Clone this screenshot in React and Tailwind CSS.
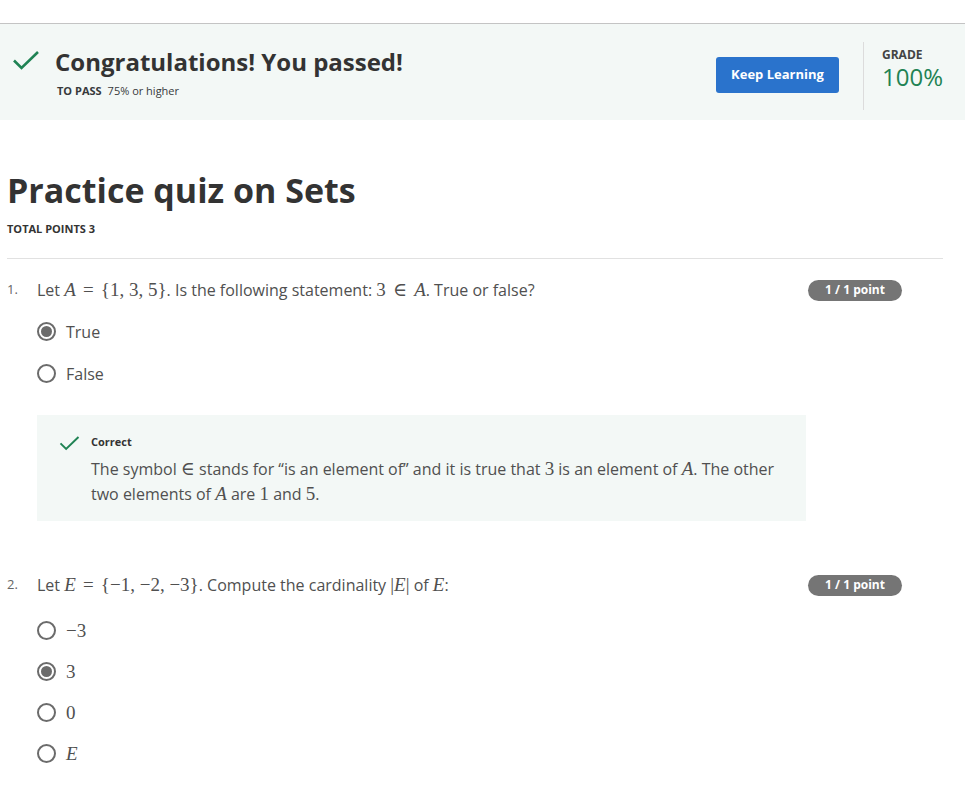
import React from 'react'

const M = ({ children, i, op }) => (
  <span
    className={`text-[19px] leading-none ${i ? 'italic' : ''} ${op ? 'mx-[3px]' : ''}`}
    style={{ fontFamily: '"Liberation Serif", "DejaVu Serif", serif' }}
  >
    {children}
  </span>
)

const Check = ({ className }) => (
  <svg viewBox="0 0 28 20" className={`shrink-0 ${className}`} fill="none">
    <path d="M2 10.5 L9.5 18 L26 2" stroke="#1f8354" strokeWidth="2.6" />
  </svg>
)

const Radio = ({ checked, children }) => (
  <div className="flex items-center h-[41px]">
    <span className="w-[19px] h-[19px] rounded-full border-2 border-[#6b6b6b] flex items-center justify-center">
      {checked && <span className="w-[11px] h-[11px] rounded-full bg-[#6b6b6b]"></span>}
    </span>
    <span className="ml-[10px] text-[16px] text-[#505050]">{children}</span>
  </div>
)

const Badge = () => (
  <span className="h-[21px] w-[94px] rounded-full bg-[#757575] text-white text-[12px] font-bold flex items-center justify-center">
    1 / 1 point
  </span>
)

const App = () => {
  return (
    <div className="min-h-screen bg-white text-[#373a3c]" style={{ fontFamily: '"Open Sans", sans-serif' }}>
      <div className="h-[24px] border-b border-[#c4c4c4]"></div>

      {/* Result banner */}
      <div className="h-[96px] bg-[#f3f8f6] flex items-center pl-[12px] pr-[18px]">
        <Check className="w-[28px] h-[20px] mb-[24px]" />
        <div className="ml-[15px] flex-1">
          <div className="text-[24px] font-bold leading-[30px] text-[#333]">Congratulations! You passed!</div>
          <div className="mt-[7px] ml-[2px] text-[11px] leading-[14px]">
            <span className="font-bold">TO PASS</span>
            <span className="ml-[6px]">75% or higher</span>
          </div>
        </div>
        <button className="h-[36px] w-[123px] rounded-[3px] bg-[#2a73cc] text-white text-[13px] font-bold mt-[5px]">
          Keep Learning
        </button>
        <div className="w-px h-[68px] bg-[#dcdcdc] ml-[24px] mr-[18px] mt-[8px]"></div>
        <div className="mb-[6px] w-[65px]">
          <div className="text-[12px] font-bold leading-[16px] text-[#444]">GRADE</div>
          <div className="text-[24px] leading-[28px] text-[#1f8354]">100%</div>
        </div>
      </div>

      <div className="px-[7px] w-[950px]">
        <h1 className="mt-[48px] text-[34px] font-bold leading-[44px] text-[#333]">Practice quiz on Sets</h1>
        <div className="mt-[10px] text-[11px] font-bold leading-[14px] text-[#333]">TOTAL POINTS 3</div>
        <div className="mt-[22px] border-t border-[#e1e1e1]"></div>

        {/* Question 1 */}
        <div className="mt-[19px] flex items-center pr-[41px]">
          <span className="w-[30px] text-[13px] text-[#666]">1.</span>
          <div className="flex-1 text-[16px] text-[#505050]">
            Let <M i>A</M> <M op>=</M> <M>{'{1, 3, 5}'}</M>. Is the following statement: <M>3</M> <M op>∈</M> <M i>A</M>. True or false?
          </div>
          <Badge />
        </div>
        <div className="ml-[30px] mt-[9px]">
          <div className="h-[42px]"><Radio checked>True</Radio></div>
          <Radio>False</Radio>
        </div>

        <div className="ml-[30px] mt-[21px] w-[769px] bg-[#f3f8f6] pl-[22px] pr-[24px] pt-[19px] pb-[14px] flex">
          <Check className="w-[21px] h-[16px] mt-[1px]" />
          <div className="ml-[11px]">
            <div className="text-[11px] font-bold leading-[16px] text-[#333]">Correct</div>
            <div className="mt-[7px] text-[16px] leading-[25px] text-[#505050]">
              The symbol <M>∈</M> stands for “is an element of” and it is true that <M>3</M> is an element of <M i>A</M>. The other two elements of <M i>A</M> are <M>1</M> and <M>5</M>.
            </div>
          </div>
        </div>

        {/* Question 2 */}
        <div className="mt-[52px] flex items-center pr-[41px]">
          <span className="w-[30px] text-[13px] text-[#666]">2.</span>
          <div className="flex-1 text-[16px] text-[#505050]">
            Let <M i>E</M> <M op>=</M> <M>{'{−1, −2, −3}'}</M>. Compute the cardinality <M>|</M><M i>E</M><M>|</M> of <M i>E</M>:
          </div>
          <Badge />
        </div>
        <div className="ml-[30px] mt-[13px]">
          <Radio><M>−3</M></Radio>
          <Radio checked><M>3</M></Radio>
          <Radio><M>0</M></Radio>
          <Radio><M i>E</M></Radio>
        </div>
      </div>
    </div>
  )
}

export default App
